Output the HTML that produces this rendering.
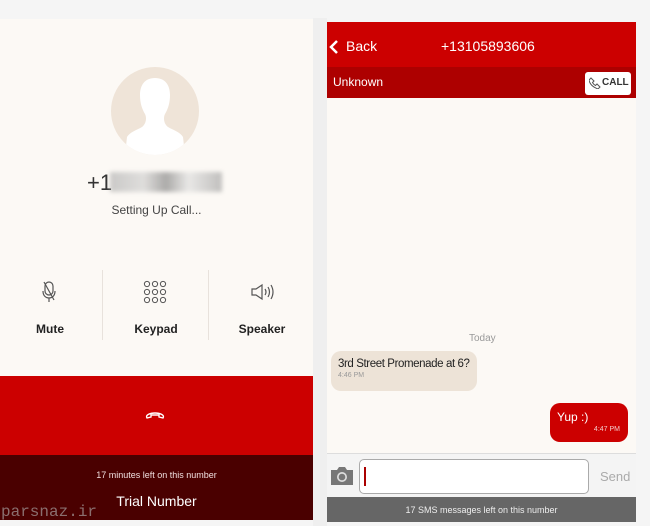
<!DOCTYPE html>
<html><head><meta charset="utf-8"><style>
*{margin:0;padding:0;box-sizing:border-box}
body{width:650px;height:526px;background:#f5f5f5;font-family:"Liberation Sans",sans-serif;position:relative;overflow:hidden}
.a{position:absolute;white-space:nowrap}
.c{text-align:center}
</style></head><body>
<div class="a" style="left:313px;top:18px;width:14px;height:508px;background:#efefef"></div>
<!-- left -->
<div class="a" style="left:0;top:19px;width:313px;height:501px;background:#fcf9f5"></div>
<div class="a" style="left:111px;top:67px;width:88px;height:88px;border-radius:50%;background:#efe4d8;overflow:hidden">
<svg width="88" height="88" viewBox="0 0 88 88"><path d="M44 11c-10 0-15 7-15 17 0 8 2 14 5 19 2 4 1 10-3 13-5 3-12 5-15 10l-2 18h60l-2-18c-3-5-10-7-15-10-4-3-5-9-3-13 3-5 5-11 5-19 0-10-5-17-15-17z" fill="#fff"/></svg></div>
<div class="a" style="left:87px;top:170px;font-size:22px;color:#333">+1</div>
<div class="a" style="left:110px;top:172px;width:112px;height:20px;background:linear-gradient(90deg,#aaa,#ccc 30%,#777 50%,#ddd 70%,#999);filter:blur(2px);opacity:.6"></div>
<div class="a c" style="left:0;width:313px;top:203px;font-size:12px;color:#444">Setting Up Call...</div>
<div class="a" style="left:102px;top:270px;width:1px;height:70px;background:#e8e2dc"></div>
<div class="a" style="left:208px;top:270px;width:1px;height:70px;background:#e8e2dc"></div>
<svg class="a" style="left:41px;top:280px" width="16" height="24" viewBox="0 0 16 24" fill="none" stroke="#555" stroke-width="1.2"><rect x="4" y="2" width="8" height="13" rx="4"/><path d="M2 11c0 5 3 7 6 7s6-2 6-7M8 18v4M3 2l10 18"/></svg>
<svg class="a" style="left:143px;top:280px" width="24" height="24" viewBox="0 0 24 24" fill="none" stroke="#555" stroke-width="1"><g><circle cx="4" cy="4" r="2.6"/><circle cx="12" cy="4" r="2.6"/><circle cx="20" cy="4" r="2.6"/><circle cx="4" cy="12" r="2.6"/><circle cx="12" cy="12" r="2.6"/><circle cx="20" cy="12" r="2.6"/><circle cx="4" cy="20" r="2.6"/><circle cx="12" cy="20" r="2.6"/><circle cx="20" cy="20" r="2.6"/></g></svg>
<svg class="a" style="left:250px;top:283px" width="24" height="18" viewBox="0 0 24 18" fill="none" stroke="#555" stroke-width="1.2"><path d="M2 6h4l6-4v14l-6-4H2z"/><path d="M15 6q2 3 0 6M18 4q3 5 0 10M21 2q4 7 0 14"/></svg>
<div class="a c" style="left:0;width:100px;top:322px;font-size:12px;font-weight:bold;color:#222">Mute</div>
<div class="a c" style="left:104px;width:104px;top:322px;font-size:12px;font-weight:bold;color:#222">Keypad</div>
<div class="a c" style="left:210px;width:104px;top:322px;font-size:12px;font-weight:bold;color:#222">Speaker</div>
<div class="a" style="left:0;top:376px;width:313px;height:79px;background:#cc0000"></div>
<svg class="a" style="left:145px;top:411px" width="20" height="9" viewBox="0 0 20 9" fill="none" stroke="#fff" stroke-width="1.4"><path d="M2 7c-2-3 3-5 8-5s10 2 8 5l-4-1v-2h-8v2z"/></svg>
<div class="a" style="left:0;top:455px;width:313px;height:65px;background:#4a0000"></div>
<div class="a c" style="left:0;width:313px;top:470px;font-size:9px;color:#f0dede">17 minutes left on this number</div>
<div class="a c" style="left:0;width:313px;top:493px;font-size:14px;color:#fff">Trial Number</div>
<div class="a" style="left:1px;top:503px;font-size:16px;color:#9a8a8a;font-family:'Liberation Mono',monospace;opacity:.8">parsnaz.ir</div>
<!-- right -->
<div class="a" style="left:327px;top:22px;width:309px;height:498px;background:#fcf9f5"></div>
<div class="a" style="left:327px;top:22px;width:309px;height:45px;background:#cc0000"></div>
<div class="a" style="left:327px;top:67px;width:309px;height:31px;background:#ad0000"></div>
<svg class="a" style="left:329px;top:39px" width="10" height="16" viewBox="0 0 10 16" fill="none" stroke="#fff" stroke-width="2.5"><path d="M8 2L2 8l6 6"/></svg>
<div class="a" style="left:346px;top:38px;font-size:14px;color:#fff">Back</div>
<div class="a" style="left:441px;top:38px;font-size:14px;color:#fff">+13105893606</div>
<div class="a" style="left:333px;top:75px;font-size:12px;color:#fff">Unknown</div>
<div class="a" style="left:585px;top:72px;width:46px;height:23px;background:#fff;border-radius:3px;font-size:10px;font-weight:bold;color:#333;padding:5px 0 0 17px">CALL</div>
<svg class="a" style="left:589px;top:77px" width="12" height="12" viewBox="0 0 12 12" fill="none" stroke="#555" stroke-width="1"><path d="M2 1l3 3-1.5 1.5q1 2 3 3L8 7l3 3-2 2Q1 9 0 3z"/></svg>
<div class="a" style="left:469px;top:333px;font-size:10px;color:#999">Today</div>
<div class="a" style="left:331px;top:351px;width:146px;height:40px;background:#ede3d7;border-radius:10px;padding:7px 0 0 7px">
<div style="font-size:11.5px;color:#222;letter-spacing:-0.4px">3rd Street Promenade at 6?</div><div style="font-size:7px;color:#999;margin-top:2px">4:46 PM</div></div>
<div class="a" style="left:550px;top:403px;width:78px;height:39px;background:#cc0000;border-radius:10px;padding:7px 0 0 7px">
<div style="font-size:12px;color:#fff">Yup :)</div><div style="font-size:7px;color:#f3cccc;text-align:right;padding-right:8px;margin-top:2px">4:47 PM</div></div>
<div class="a" style="left:327px;top:453px;width:309px;height:44px;background:#f4f4f4;border-top:1px solid #ddd"></div>
<svg class="a" style="left:329px;top:465px" width="26" height="22" viewBox="0 0 26 22"><path d="M2 5h6l2-3h6l2 3h6v15H2z" fill="#777"/><circle cx="13" cy="12" r="5" fill="#ddd"/><circle cx="13" cy="12" r="3.3" fill="#777"/></svg>
<div class="a" style="left:359px;top:459px;width:230px;height:35px;background:#fff;border:1px solid #aaa;border-radius:5px"></div>
<div class="a" style="left:364px;top:467px;width:2px;height:19px;background:#a00"></div>
<div class="a" style="left:600px;top:469px;font-size:13px;color:#aaa">Send</div>
<div class="a" style="left:327px;top:497px;width:309px;height:25px;background:#666"></div>
<div class="a c" style="left:327px;width:309px;top:505px;font-size:9px;color:#eee">17 SMS messages left on this number</div>
</body></html>
